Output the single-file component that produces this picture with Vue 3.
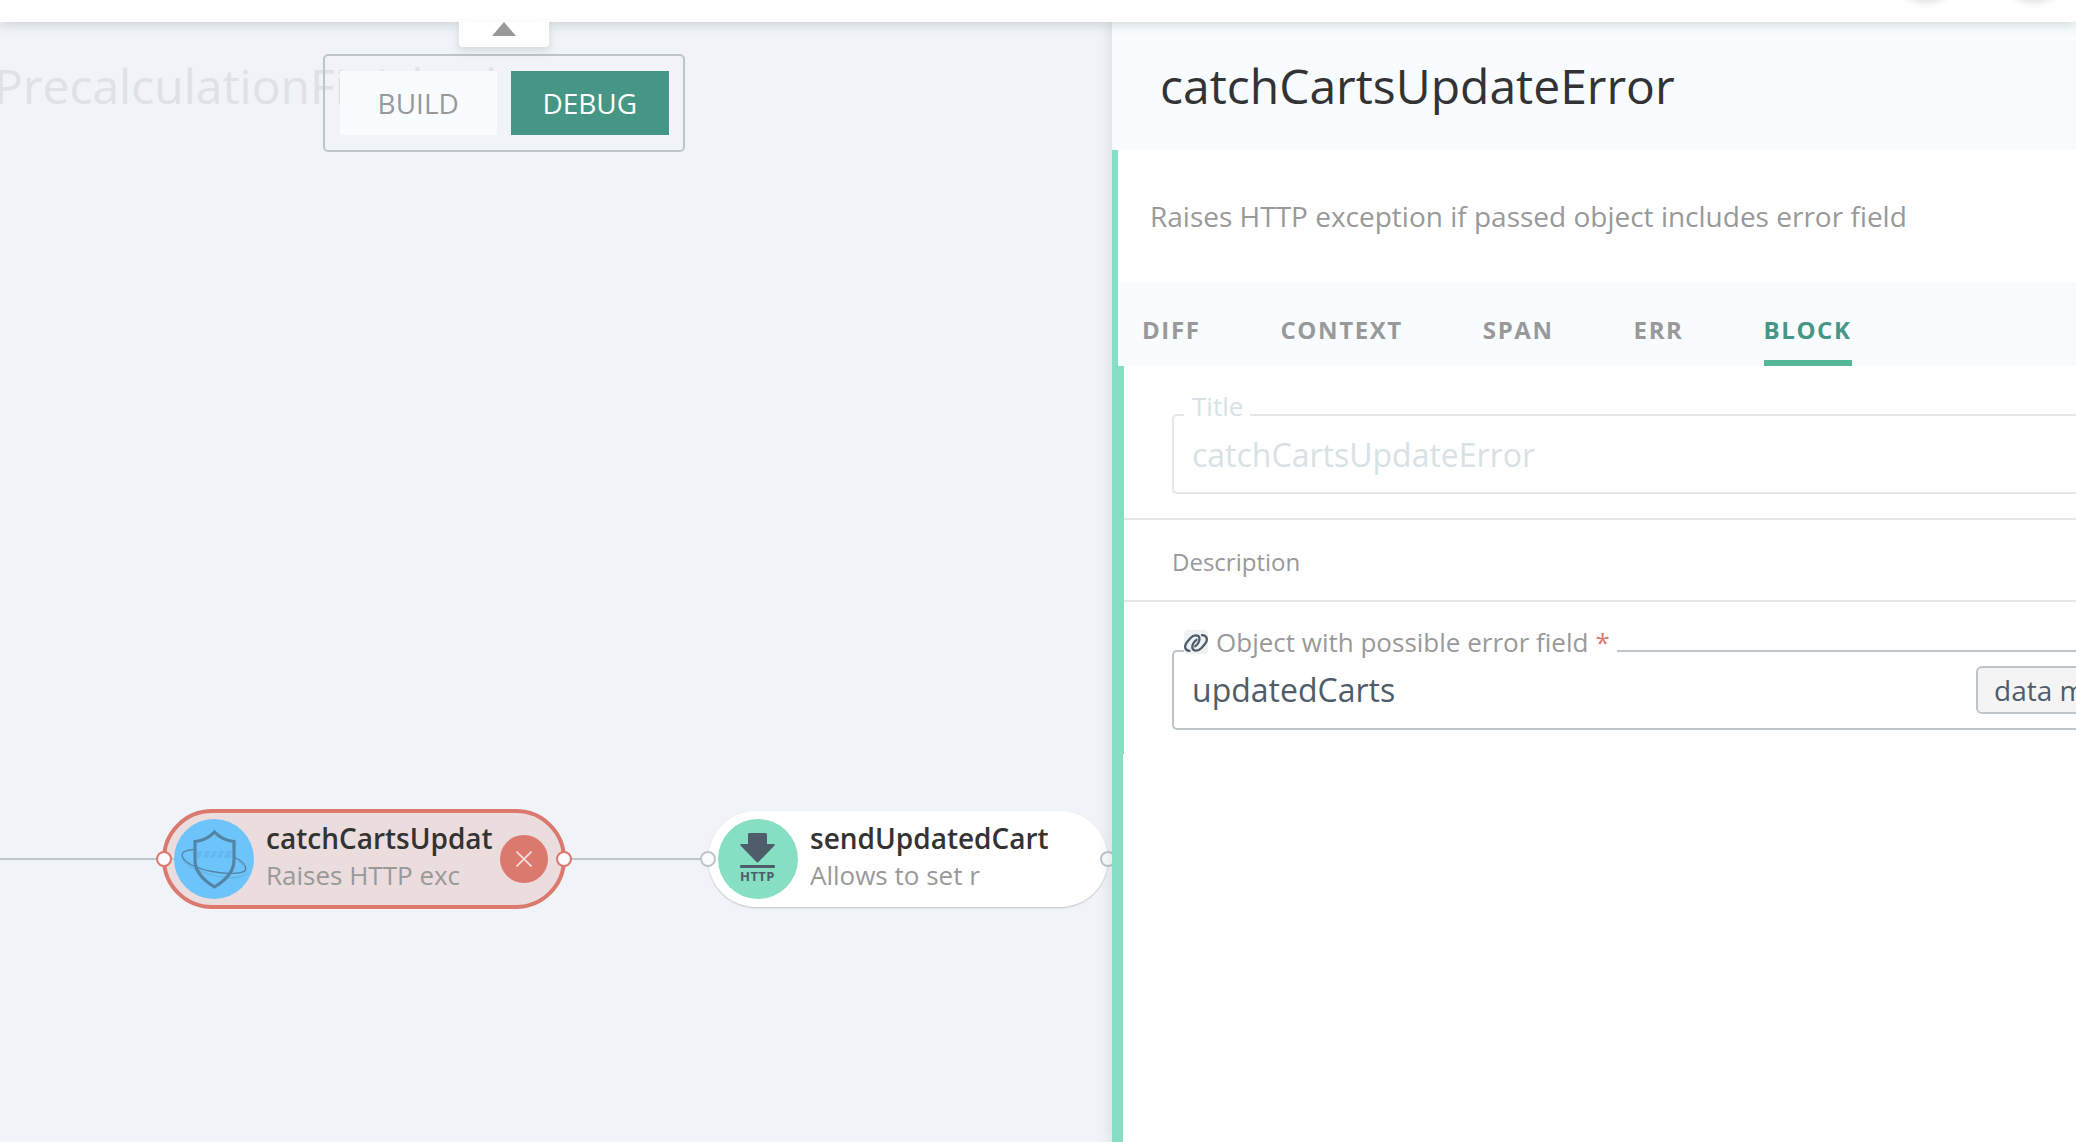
<script setup>
const tabs = ['DIFF', 'CONTEXT', 'SPAN', 'ERR', 'BLOCK']
const active = 'BLOCK'
</script>

<template>
  <div class="app">
    <header class="topbar">
      <span class="round first"></span>
      <span class="round second"></span>
      <div class="collapse">
        <svg width="24" height="14" viewBox="0 0 24 14"><path d="M12 0 24 14H0z" fill="#999" /></svg>
      </div>
    </header>
    <main class="body">
      <section class="canvas">
        <h2 class="flow-name">PrecalculationFinished</h2>
        <div class="modes">
          <button class="mode">BUILD</button>
          <button class="mode on">DEBUG</button>
        </div>
        <i class="wire in"></i>
        <i class="wire mid"></i>

        <div class="node failed">
          <span class="badge blue">
            <svg width="80" height="80" viewBox="0 0 80 80" fill="none">
              <path d="M8.500 37C8 44 20 52 40 56.500C58 60 70 59 72 54C72.500 50 70 46 64 42" stroke="#63b2e4" stroke-width="1.200" />
              <path d="M23.500 32h35l-2 7h-35z" fill="#65b9ee" />
              <g stroke="#6cc4fb" stroke-width="2.200">
                <path d="m31 31-4 9M38 31l-4 9M45 31l-4 9M52 31l-4 9" />
              </g>
              <path d="M40.500 13C36 18 30 21.500 21 22.500V41c0 12 8 20 19.500 27C52 61 60 53 60 41V22.500C51 21.500 45 18 40.500 13z" stroke="#5384a4" stroke-width="3.200" />
              <path d="M20 30.500C12 31 8 33 8 36C8.500 43 22 49.500 38 52.500C55 55.500 70 55 71.500 50.500C72.500 47 69 42.500 61 38.500" stroke="#5384a4" stroke-width="1.300" />
            </svg>
          </span>
          <div class="text">
            <strong>catchCartsUpdat</strong>
            <span>Raises HTTP exc</span>
          </div>
          <span class="cross">
            <svg width="16" height="16" viewBox="0 0 16 16"><path d="M.5.500l15 15M15.500.500l-15 15" stroke="#f6dfdf" stroke-width="1.700" /></svg>
          </span>
          <i class="port left"></i>
          <i class="port right"></i>
        </div>

        <div class="node next">
          <span class="badge green">
            <svg width="80" height="80" viewBox="0 0 80 80">
              <path d="M31.500 14h16q1.500 0 1.500 1.500V25h7q1.500.300.500 1.500L40.500 43q-1 .800-2 0L22.500 26.500q-1-1.200.500-1.500h7v-9.500q0-1.500 1.500-1.500z" fill="#4f5c69" />
              <rect x="22" y="46" width="35" height="3" rx="1" fill="#4f5c69" />
              <text x="22" y="62" textLength="34.500" class="http">HTTP</text>
            </svg>
          </span>
          <div class="text">
            <strong>sendUpdatedCart</strong>
            <span>Allows to set r</span>
          </div>
          <i class="port left"></i>
          <i class="port right"></i>
        </div>
      </section>

      <aside class="panel">
        <h1 class="title">catchCartsUpdateError</h1>
        <div class="content">
          <p class="summary">Raises HTTP exception if passed object includes error field</p>
          <nav class="tabs">
            <a v-for="t in tabs" :key="t" :class="['tab', { active: t === active }]">{{ t }}</a>
          </nav>
          <div class="form">
            <div class="field disabled">
              <label class="legend">Title</label>
              <span class="value">catchCartsUpdateError</span>
            </div>
            <div class="description">Description</div>
            <div class="field linked">
              <label class="legend">
                <svg class="link" width="24" height="24" viewBox="0 0 24 24">
                  <rect width="24" height="24" rx="4" fill="#eef2f3" />
                  <g fill="none" stroke="#4f5c69" stroke-width="2.300" stroke-linecap="round">
                    <path d="M5.500 20.800C1 20.500 0 16.500 2.500 12.800L6.500 8C10 4.300 15.500 4.500 15.500 9C15.400 12 13.500 14.500 11.300 16.200" />
                    <path d="M18 5.200C23 5.500 24 9.500 21.500 13.200L17.500 18C14 21.700 8.300 21.500 8.300 17C8.400 14 10.300 11.500 12.500 9.800" />
                  </g>
                </svg>
                <span>Object with possible error field</span>
                <b>*</b>
              </label>
              <span class="value">updatedCarts</span>
              <span class="chip">data mapper</span>
            </div>
          </div>
        </div>
      </aside>
    </main>
  </div>
</template>

<style>
body {
  margin: 0;
  overflow: hidden;
}
</style>

<style scoped>
.app {
  width: 2076px;
  height: 1142px;
  display: flex;
  flex-direction: column;
  overflow: hidden;
  font-family: "Open Sans", "Noto Sans", sans-serif;
  color: #333;
  background: #fff;
}
.app * {
  box-sizing: border-box;
}
.topbar {
  position: relative;
  z-index: 3;
  flex: none;
  height: 22px;
  background: #fff;
  box-shadow: 0 2px 12px rgba(70, 85, 85, 0.24);
}
.round {
  position: absolute;
  top: -60px;
  width: 60px;
  height: 60px;
  border-radius: 50%;
  box-shadow: 0 0 8px 2px rgba(0, 0, 0, 0.15);
}
.first { left: 1896px; }
.second { left: 2004px; }
.collapse {
  position: absolute;
  left: 459px;
  top: 22px;
  width: 90px;
  height: 25px;
  display: flex;
  justify-content: center;
  background: #fff;
  border-radius: 0 0 4px 4px;
  box-shadow: 0 4px 8px rgba(70, 85, 85, 0.16);
}
.body {
  flex: 1;
  display: flex;
  min-height: 0;
}
.canvas {
  position: relative;
  width: 1112px;
  flex: none;
  background: #f0f3f8;
}
.flow-name {
  position: absolute;
  left: -6px;
  top: 34px;
  margin: 0;
  font-size: 48px;
  line-height: 60px;
  font-weight: 400;
  color: #dfe1e5;
}
.modes {
  position: absolute;
  left: 323px;
  top: 32px;
  width: 362px;
  height: 98px;
  padding: 15px 14.500px 15px 14.500px;
  display: flex;
  gap: 14px;
  align-items: flex-start;
  border: 2px solid #bec5ca;
  border-radius: 5px;
}
.mode {
  flex: 1;
  height: 64px;
  border: 0;
  padding: 0;
  background: #f8fcff;
  color: #999;
  font: 400 28px/64px "Open Sans", sans-serif;
}
.mode.on {
  background: #469686;
  color: #fff;
}
.wire {
  position: absolute;
  top: 836px;
  height: 2px;
  background: #bec5ca;
}
.in { left: 0; width: 174px; z-index: 1; }
.mid { left: 564px; width: 144px; }
.node {
  position: absolute;
  top: 789px;
  width: 400px;
  height: 96px;
  padding: 0 16px 0 10px;
  display: flex;
  align-items: center;
  border-radius: 48px;
}
.failed {
  left: 164px;
  background: #ebdcdd;
}
.failed::before {
  content: "";
  position: absolute;
  inset: -2px;
  border: 4px solid #db796e;
  border-radius: 50px;
}
.next {
  left: 708px;
  background: #fff;
  box-shadow: 0 1px 2px rgba(0, 0, 0, 0.2);
}
.badge {
  flex: none;
  width: 80px;
  height: 80px;
  border-radius: 50%;
}
.badge svg, .collapse svg, .cross svg {
  display: block;
}
.blue { background: #6cc4fb; }
.green { background: #86dfc2; }
.http {
  font: 700 13px "Open Sans", sans-serif;
  fill: #4f5c69;
}
.text {
  flex: 1;
  margin: -6px 0 0 12px;
  display: flex;
  flex-direction: column;
  white-space: nowrap;
}
.text strong {
  font-size: 28px;
  line-height: 38px;
  font-weight: 600;
}
.text span {
  font-size: 26px;
  line-height: 36px;
  color: #999;
}
.cross {
  flex: none;
  width: 48px;
  height: 48px;
  display: grid;
  place-items: center;
  border-radius: 50%;
  background: #db796e;
}
.port {
  position: absolute;
  z-index: 2;
  top: 40px;
  width: 16px;
  height: 16px;
  border: 2px solid #bec5ca;
  border-radius: 50%;
  background: #f8fcff;
}
.failed .port { border-color: #db796e; }
.port.left { left: -8px; }
.port.right { right: -8px; }
.panel {
  position: relative;
  z-index: 2;
  flex: 1;
  min-width: 0;
  display: flex;
  flex-direction: column;
  background: #fff;
  box-shadow: 0 0 14px rgba(70, 85, 85, 0.18);
}
.title {
  flex: none;
  margin: 0;
  height: 128px;
  padding-left: 48px;
  font-size: 48px;
  line-height: 128px;
  font-weight: 400;
  background: #f8fcff;
}
.content {
  flex: 1;
  border-left: 6px solid #86dfc2;
}
.summary {
  margin: 0;
  height: 132px;
  padding-left: 32px;
  font-size: 28px;
  line-height: 132px;
  color: #999;
  white-space: nowrap;
}
.tabs {
  height: 84px;
  padding-left: 24px;
  display: flex;
  gap: 80px;
  background: #f8fcff;
}
.tab {
  padding-top: 18px;
  border-bottom: 6px solid transparent;
  font-size: 24px;
  line-height: 60px;
  font-weight: 700;
  letter-spacing: 1.6px;
  color: #999;
}
.tab.active {
  color: #469686;
  border-color: #54b79a;
}
.form {
  height: 388px;
  border-left: 6px solid #86dfc2;
  padding-top: 48px;
}
.content::after {
  content: "";
  display: block;
  width: 5px;
  height: 388px;
  background: #86dfc2;
}
.field {
  position: relative;
  height: 80px;
  margin-left: 48px;
  border: 2px solid #bec5ca;
  border-right: 0;
  border-radius: 5px 0 0 5px;
  display: flex;
  align-items: center;
  padding-left: 18px;
  color: #4f5c69;
  white-space: nowrap;
}
.value {
  font-size: 32px;
  line-height: 44px;
}
.legend {
  position: absolute;
  left: 10px;
  top: -28px;
  height: 36px;
  display: flex;
  align-items: center;
  padding: 0 7px 0 8px;
  background: #fff;
  color: #999;
  font-size: 26px;
  line-height: 36px;
}
.disabled {
  border-color: #e6e6e6;
  color: #d8e2e5;
}
.disabled .legend { color: #d8e2e5; }
.disabled .value { padding-top: 2px; }
.linked { margin-top: 48px; }
.linked .legend { padding-left: 0; }
.link { margin-right: 8px; }
.legend b {
  margin-left: 7px;
  font-weight: 400;
  color: #db796e;
}
.description {
  height: 84px;
  margin-top: 24px;
  padding-left: 48px;
  border: solid #e6e6e6;
  border-width: 2px 0;
  font-size: 24px;
  line-height: 84px;
  color: #999;
}
.chip {
  position: absolute;
  left: 802px;
  top: 14px;
  height: 48px;
  padding: 0 16px;
  border: 2px solid #bec5ca;
  border-radius: 6px;
  background: #f4f4f4;
  font-size: 28px;
  line-height: 44px;
}
</style>
